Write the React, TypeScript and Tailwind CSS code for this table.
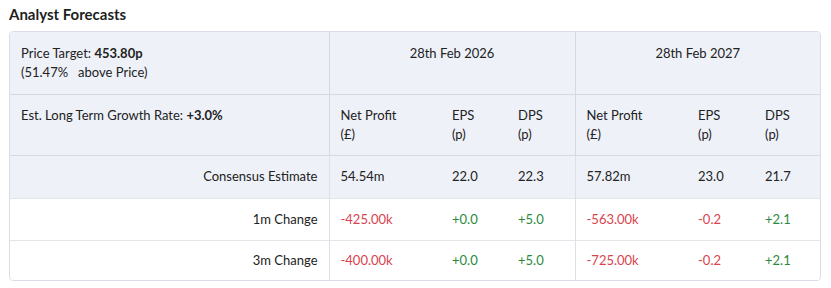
import React from 'react';

const RED = 'text-[#d9434f]';
const GREEN = 'text-[#2a8a3c]';

type Cell = { v: string; c?: string };

const rows: { label: string; cells: Cell[]; h: string; shaded?: boolean }[] = [
    {
        label: 'Consensus Estimate',
        shaded: true,
        h: 'h-[43px]',
        cells: [{ v: '54.54m' }, { v: '22.0' }, { v: '22.3' }, { v: '57.82m' }, { v: '23.0' }, { v: '21.7' }],
    },
    {
        label: '1m Change',
        h: 'h-[42px]',
        cells: [
            { v: '-425.00k', c: RED },
            { v: '+0.0', c: GREEN },
            { v: '+5.0', c: GREEN },
            { v: '-563.00k', c: RED },
            { v: '-0.2', c: RED },
            { v: '+2.1', c: GREEN },
        ],
    },
    {
        label: '3m Change',
        h: 'h-[40px]',
        cells: [
            { v: '-400.00k', c: RED },
            { v: '+0.0', c: GREEN },
            { v: '+5.0', c: GREEN },
            { v: '-725.00k', c: RED },
            { v: '-0.2', c: RED },
            { v: '+2.1', c: GREEN },
        ],
    },
];

const App: React.FC = () => {
    return (
        <div className="bg-white w-[831px] h-[288px] px-[9px] pt-[3px] text-[#222] font-['Lato','Liberation_Sans',sans-serif] text-[13px] leading-[19px]">
            <h2 className="text-[15px] font-bold leading-[22px] mb-[6px] text-[#1f1f1f]">Analyst Forecasts</h2>

            <div className="w-[812px] border border-[#d9dde5] rounded-[4px] overflow-hidden">
                <table className="w-full table-fixed border-collapse">
                    <colgroup>
                        <col className="w-[319px]" />
                        <col className="w-[112px]" />
                        <col className="w-[66px]" />
                        <col className="w-[68px]" />
                        <col className="w-[112px]" />
                        <col className="w-[67px]" />
                        <col />
                    </colgroup>
                    <thead className="bg-[#eef1f8]">
                        <tr className="h-[62px] border-b border-[#d5d9e2]">
                            <th className="align-top text-left font-normal px-[11px] pt-[12px] border-r border-[#d5d9e2]">
                                Price Target: <span className="font-bold">453.80p</span>
                                <br />
                                (51.47%&nbsp;&nbsp; above Price)
                            </th>
                            <th colSpan={3} className="align-top text-center font-normal pt-[12px] border-r border-[#d5d9e2]">
                                28th Feb 2026
                            </th>
                            <th colSpan={3} className="align-top text-center font-normal pt-[12px]">
                                28th Feb 2027
                            </th>
                        </tr>
                        <tr className="h-[61px] border-b border-[#d5d9e2]">
                            <th className="align-top text-left font-normal px-[11px] pt-[11px] border-r border-[#d5d9e2]">
                                Est. Long Term Growth Rate: <span className="font-bold">+3.0%</span>
                            </th>
                            <th className="align-top text-left font-normal px-[11px] pt-[11px]">Net Profit<br />(£)</th>
                            <th className="align-top text-left font-normal px-[11px] pt-[11px]">EPS<br />(p)</th>
                            <th className="align-top text-left font-normal px-[11px] pt-[11px] border-r border-[#d5d9e2]">DPS<br />(p)</th>
                            <th className="align-top text-left font-normal px-[11px] pt-[11px]">Net Profit<br />(£)</th>
                            <th className="align-top text-left font-normal px-[11px] pt-[11px]">EPS<br />(p)</th>
                            <th className="align-top text-left font-normal px-[11px] pt-[11px]">DPS<br />(p)</th>
                        </tr>
                    </thead>
                    <tbody>
                        {rows.map((r, i) => (
                            <tr
                                key={r.label}
                                className={`${r.h} ${r.shaded ? 'bg-[#eef1f8]' : 'bg-white'} ${i < rows.length - 1 ? 'border-b border-[#e3e5ea]' : ''}`}
                            >
                                <td className="text-right px-[11px] border-r border-[#dde0e7]">{r.label}</td>
                                {r.cells.map((c, j) => (
                                    <td
                                        key={j}
                                        className={`text-left px-[11px] ${c.c ?? ''} ${j === 2 ? 'border-r border-[#dde0e7]' : ''}`}
                                    >
                                        {c.v}
                                    </td>
                                ))}
                            </tr>
                        ))}
                    </tbody>
                </table>
            </div>
        </div>
    );
};

export default App;
